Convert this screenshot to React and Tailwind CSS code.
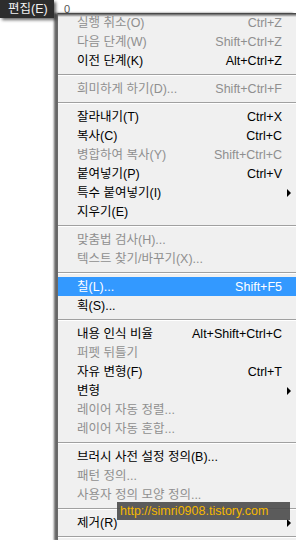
import React from 'react';

const items = [
    { label: '실행 취소(O)', key: 'Ctrl+Z', off: true },
    { label: '다음 단계(W)', key: 'Shift+Ctrl+Z', off: true },
    { label: '이전 단계(K)', key: 'Alt+Ctrl+Z' },
    'sep',
    { label: '희미하게 하기(D)...', key: 'Shift+Ctrl+F', off: true },
    'sep',
    { label: '잘라내기(T)', key: 'Ctrl+X' },
    { label: '복사(C)', key: 'Ctrl+C' },
    { label: '병합하여 복사(Y)', key: 'Shift+Ctrl+C', off: true },
    { label: '붙여넣기(P)', key: 'Ctrl+V' },
    { label: '특수 붙여넣기(I)', sub: true },
    { label: '지우기(E)' },
    'sep',
    { label: '맞춤법 검사(H)...', off: true },
    { label: '텍스트 찾기/바꾸기(X)...', off: true },
    'sep',
    { label: '칠(L)...', key: 'Shift+F5', active: true },
    { label: '획(S)...' },
    'sep',
    { label: '내용 인식 비율', key: 'Alt+Shift+Ctrl+C' },
    { label: '퍼펫 뒤틀기', off: true },
    { label: '자유 변형(F)', key: 'Ctrl+T' },
    { label: '변형', sub: true },
    { label: '레이어 자동 정렬...', off: true },
    { label: '레이어 자동 혼합...', off: true },
    'sep',
    { label: '브러시 사전 설정 정의(B)...' },
    { label: '패턴 정의...', off: true },
    { label: '사용자 정의 모양 정의...', off: true },
    'sep',
    { label: '제거(R)', sub: true },
    'sep',
];

const Row = ({ item }) => {
    const color = item.active ? 'text-white' : item.off ? 'text-[#8f8f8f]' : 'text-black';
    return (
        <div className={`h-[19px] flex items-center pl-[19px] ${item.active ? 'bg-[#3399ff]' : ''} ${color}`}>
            <span className="flex-1 whitespace-nowrap pt-[2px]">{item.label}</span>
            {item.key && <span className="whitespace-nowrap pt-[2px]">{item.key}</span>}
            <span className="w-[14px] h-full flex items-center pl-[5px]">
                {item.sub && (
                    <span className="w-0 h-0 border-y-[4px] border-y-transparent border-l-[4px] border-l-black" />
                )}
            </span>
        </div>
    );
};

export default function App() {
    return (
        <div className="relative w-[296px] h-[540px] bg-white overflow-hidden flex font-['Liberation_Sans','Noto_Sans_CJK_KR',sans-serif] text-[12.5px] leading-none">
            <div className="w-[57px] shrink-0">
                <div className="relative z-20 h-[18px] w-[54px] bg-[#2d2d2d] text-[#f2f2f2] flex items-center pl-[8px] pt-[1px] shadow-[2px_2px_3px_rgba(0,0,0,0.6)]">
                    편집(E)
                </div>
            </div>

            <div className="flex-1 min-w-0 flex flex-col">
                <div className="h-[13px] shrink-0 pl-[7px] pt-[4px] text-[11px] text-[#555]">0</div>
                <div className="relative flex-1 bg-[#f0f0f0] border-l border-[#6a6a6a] shadow-[-3px_0_2px_rgba(0,0,0,0.6)]">
                    <div className="absolute inset-x-0 top-0 h-[4px] bg-gradient-to-b from-black/80 to-transparent" />
                    {items.map((it, i) =>
                        it === 'sep' ? (
                            <div key={i} className="h-[9px] flex items-center">
                                <div className="w-full border-t border-[#a0a0a0] border-b border-b-white" />
                            </div>
                        ) : (
                            <Row key={i} item={it} />
                        )
                    )}
                </div>
            </div>

            <div className="absolute left-[117px] top-[502px] w-[173px] h-[18px] bg-[#4a4a4a]/90 flex items-center pl-[3px] text-[12.5px] text-[#f5b800] whitespace-nowrap">
                http://simri0908.tistory.com
            </div>
        </div>
    );
}
